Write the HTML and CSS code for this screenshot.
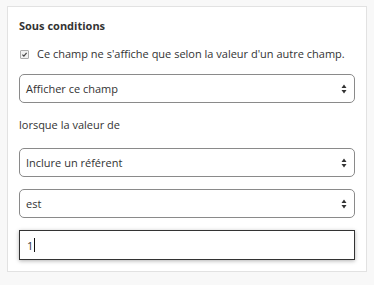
FILE: index.html
```html
<!DOCTYPE html>
<html lang="fr">
<head>
<meta charset="utf-8">
<link rel="stylesheet" href="styles.css">
</head>
<body>
<div class="card">
  <div class="title">Sous conditions</div>
  <label class="check-row">
    <span class="checkbox"><svg viewBox="0 0 8 8" width="8" height="8"><path d="M1.6 4.2 L3.3 5.8 L6.4 2.2" fill="none" stroke="#444" stroke-width="1.4"/></svg></span>
    <span>Ce champ ne s'affiche que selon la valeur d'un autre champ.</span>
  </label>
  <div class="select first"><span>Afficher ce champ</span><svg class="arrows" viewBox="0 0 6 10" width="6" height="10"><path d="M3 0.5 L5.5 4 L0.5 4 Z M3 9.5 L5.5 6 L0.5 6 Z" fill="#333"/></svg></div>
  <div class="label">lorsque la valeur de</div>
  <div class="select"><span>Inclure un référent</span><svg class="arrows" viewBox="0 0 6 10" width="6" height="10"><path d="M3 0.5 L5.5 4 L0.5 4 Z M3 9.5 L5.5 6 L0.5 6 Z" fill="#333"/></svg></div>
  <div class="select gap"><span>est</span><svg class="arrows" viewBox="0 0 6 10" width="6" height="10"><path d="M3 0.5 L5.5 4 L0.5 4 Z M3 9.5 L5.5 6 L0.5 6 Z" fill="#333"/></svg></div>
  <div class="field"><span>1</span><span class="caret"></span></div>
</div>
</body>
</html>
```
FILE: styles.css
```css
html, body {
  margin: 0;
  padding: 0;
}
body {
  background: #f8f8f8;
  font-family: "Open Sans", "Liberation Sans", sans-serif;
  font-size: 11px;
  color: #333;
  padding: 6px 7px 0 7px;
  height: 285px;
  box-sizing: border-box;
}
.card {
  width: 360px;
  box-sizing: border-box;
  background: #fff;
  border: 1px solid #e2e2e2;
  padding: 11px 11px 11px 11px;
}
.title {
  font-weight: 700;
  line-height: 16px;
}
.check-row {
  display: flex;
  align-items: center;
  gap: 8px;
  margin-top: 12px;
  line-height: 16px;
  padding-left: 1px;
}
.checkbox {
  display: inline-flex;
  width: 7px;
  height: 7px;
  border: 1px solid #aaa;
  border-radius: 1px;
  background: #f0f0f0;
  align-items: center;
  justify-content: center;
}
.checkbox svg {
  display: block;
  width: 7px;
  height: 7px;
}
.select {
  display: flex;
  align-items: center;
  justify-content: space-between;
  height: 29px;
  box-sizing: border-box;
  border: 1px solid #8a8a8a;
  border-radius: 5px;
  padding: 0 7px 0 6px;
  background: #fff;
}
.select.first {
  margin-top: 12px;
}
.select.gap {
  margin-top: 12px;
}
.arrows {
  display: block;
}
.label {
  line-height: 16px;
  margin-top: 14px;
  margin-bottom: 15px;
}
.field {
  display: flex;
  align-items: center;
  margin-top: 12px;
  height: 30px;
  box-sizing: border-box;
  border: 1px solid #333;
  padding: 0 7px;
  box-shadow: 0 1px 4px rgba(0, 0, 0, 0.3);
  background: #fff;
}
.caret {
  display: inline-block;
  width: 1px;
  height: 14px;
  background: #111;
  margin-left: 1px;
}
```
